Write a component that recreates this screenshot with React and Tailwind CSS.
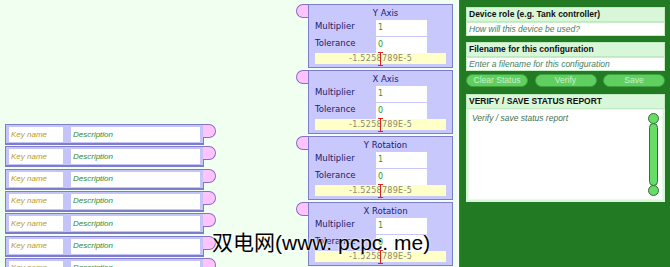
import React from "react";

const axes = ["Y Axis", "X Axis", "Y Rotation", "X Rotation"];
const keyRows = [0, 1, 2, 3, 4, 5, 6];

function KeyRow() {
  return (
    <div className="flex items-start h-[21px] shrink-0">
      <div className="w-[199px] h-[21px] bg-[#c4c4f8] border border-[#7d7dcc] border-b-2 flex items-stretch px-[3px] pt-[2px] pb-[1px] gap-[8px]">
        <div className="w-[54px] bg-white flex items-center pl-[2px] text-[8px] italic text-[#b89a2a]">Key name</div>
        <div className="flex-1 bg-white flex items-center pl-[2px] text-[8px] italic text-[#2f8a2f]">Description</div>
      </div>
      <div className="w-[13px] h-[14px] bg-[#ffc4ff] border border-[#8b6dc4] border-l-0 rounded-r-full -ml-[1px]"></div>
    </div>
  );
}

function AxisCard({ title }) {
  return (
    <div className="flex items-start h-[64px] shrink-0">
      <div className="w-[13px] h-[14px] bg-[#ffc4ff] border border-[#8b6dc4] border-r-0 rounded-l-full -mr-[1px]"></div>
      <div className="relative w-[145px] h-[64px] bg-[#c8c8fc] border border-[#7d7dcc] px-[6px] pt-[2px]" style={{ fontFamily: '"DejaVu Sans", sans-serif' }}>
        <div className="h-[13px] text-center text-[8.5px] leading-[13px] text-[#202070] pl-[10px]">{title}</div>
        <div className="flex flex-col gap-[1px] pr-[19px]">
          <div className="flex items-center h-[16px]">
            <div className="w-[61px] text-[8.5px] font-medium text-[#20206e] -mt-[4px]">Multiplier</div>
            <div className="flex-1 h-[16px] bg-white pl-[2px] pt-[3px] text-[8px] text-[#2a9a2a] leading-[10px]">1</div>
          </div>
          <div className="flex items-center h-[16px]">
            <div className="w-[61px] text-[8.5px] font-medium text-[#20206e] -mt-[4px]">Tolerance</div>
            <div className="flex-1 h-[16px] bg-white pl-[2px] pt-[3px] text-[8px] text-[#2a9a2a] leading-[10px]">0</div>
          </div>
        </div>
        <div className="h-[11px] bg-[#ffffc8] text-center text-[8px] leading-[11px] text-[#8a8a70] tracking-[0.3px]">-1.5258789E-5</div>
        <div className="absolute left-[69px] bottom-[1px] w-[5px] h-[14px] flex flex-col items-center">
          <div className="w-[5px] h-[1px] bg-[#e02020]"></div>
          <div className="w-[1px] flex-1 bg-[#e02020]"></div>
          <div className="w-[5px] h-[1px] bg-[#e02020]"></div>
        </div>
      </div>
    </div>
  );
}

function Header({ children }) {
  return (
    <div className="h-[15px] bg-[#d8f6d8] border border-[#bfeabf] pl-[2px] text-[8.5px] font-bold leading-[13px] text-[#111]">{children}</div>
  );
}

function Field({ children }) {
  return (
    <div className="h-[14px] bg-white border border-[#c6efc6] pl-[2px] text-[8.5px] italic leading-[12px] text-[#3f7f5f]">{children}</div>
  );
}

function PillButton({ children }) {
  return (
    <button className="h-[13px] w-[62px] rounded-full bg-[#5fd05f] border border-[#3fa03f] text-[8.5px] leading-[11px] text-[#c8f2c8]">{children}</button>
  );
}

export default function App() {
  return (
    <div className="relative w-[670px] h-[267px] overflow-hidden bg-[#f0fff0] flex" style={{ fontFamily: '"Liberation Sans", Arial, sans-serif' }}>
      <div className="w-[296px] shrink-0 pl-[5px] pt-[124px] flex flex-col gap-[1.33px]">
        {keyRows.map((i) => (
          <KeyRow key={i} />
        ))}
      </div>

      <div className="w-[158px] shrink-0 pt-[4px] flex flex-col gap-[2px]">
        {axes.map((a) => (
          <AxisCard key={a} title={a} />
        ))}
      </div>

      <div className="ml-[5px] flex-1 h-full bg-[#227b22] border-l border-[#2e8c2e] pl-[6px] pr-[5px] pt-[7px]">
        <Header>Device role (e.g. Tank controller)</Header>
        <Field>How will this device be used?</Field>
        <div className="h-[6px]"></div>
        <Header>Filename for this configuration</Header>
        <Field>Enter a filename for this configuration</Field>
        <div className="flex justify-between mt-[3px]">
          <PillButton>Clear Status</PillButton>
          <PillButton>Verify</PillButton>
          <PillButton>Save</PillButton>
        </div>
        <div className="h-[7px]"></div>
        <Header>VERIFY / SAVE STATUS REPORT</Header>
        <div className="h-[93px] bg-[#d8f6d8] p-[2px] pt-0">
          <div className="relative h-full bg-white border border-[#e6fae6] flex">
            <div className="flex-1 pl-[3px] pt-[2px] text-[8.5px] italic leading-[12px] text-[#3f6f4f]">Verify / save status report</div>
            <div className="w-[12px] mr-[3px] mt-[3px] mb-[3px] flex flex-col items-center">
              <div className="w-[11px] h-[11px] rounded-full bg-[#66dd66] border border-[#3a6a3a]"></div>
              <div className="w-[9px] flex-1 -my-[1px] rounded-full bg-[#66dd66] border border-[#3a6a3a]"></div>
              <div className="w-[11px] h-[11px] rounded-full bg-[#66dd66] border border-[#3a6a3a]"></div>
            </div>
          </div>
        </div>
      </div>

      <div
        className="absolute left-[212px] top-[229px] text-[21px] leading-[28px] text-black whitespace-nowrap"
        style={{ fontFamily: '"Liberation Sans", "Noto Sans CJK SC", sans-serif', textShadow: "0 0 2px #fff, 0 0 2px #fff" }}
      >
        双电网(www. pcpc. me)
      </div>
    </div>
  );
}
